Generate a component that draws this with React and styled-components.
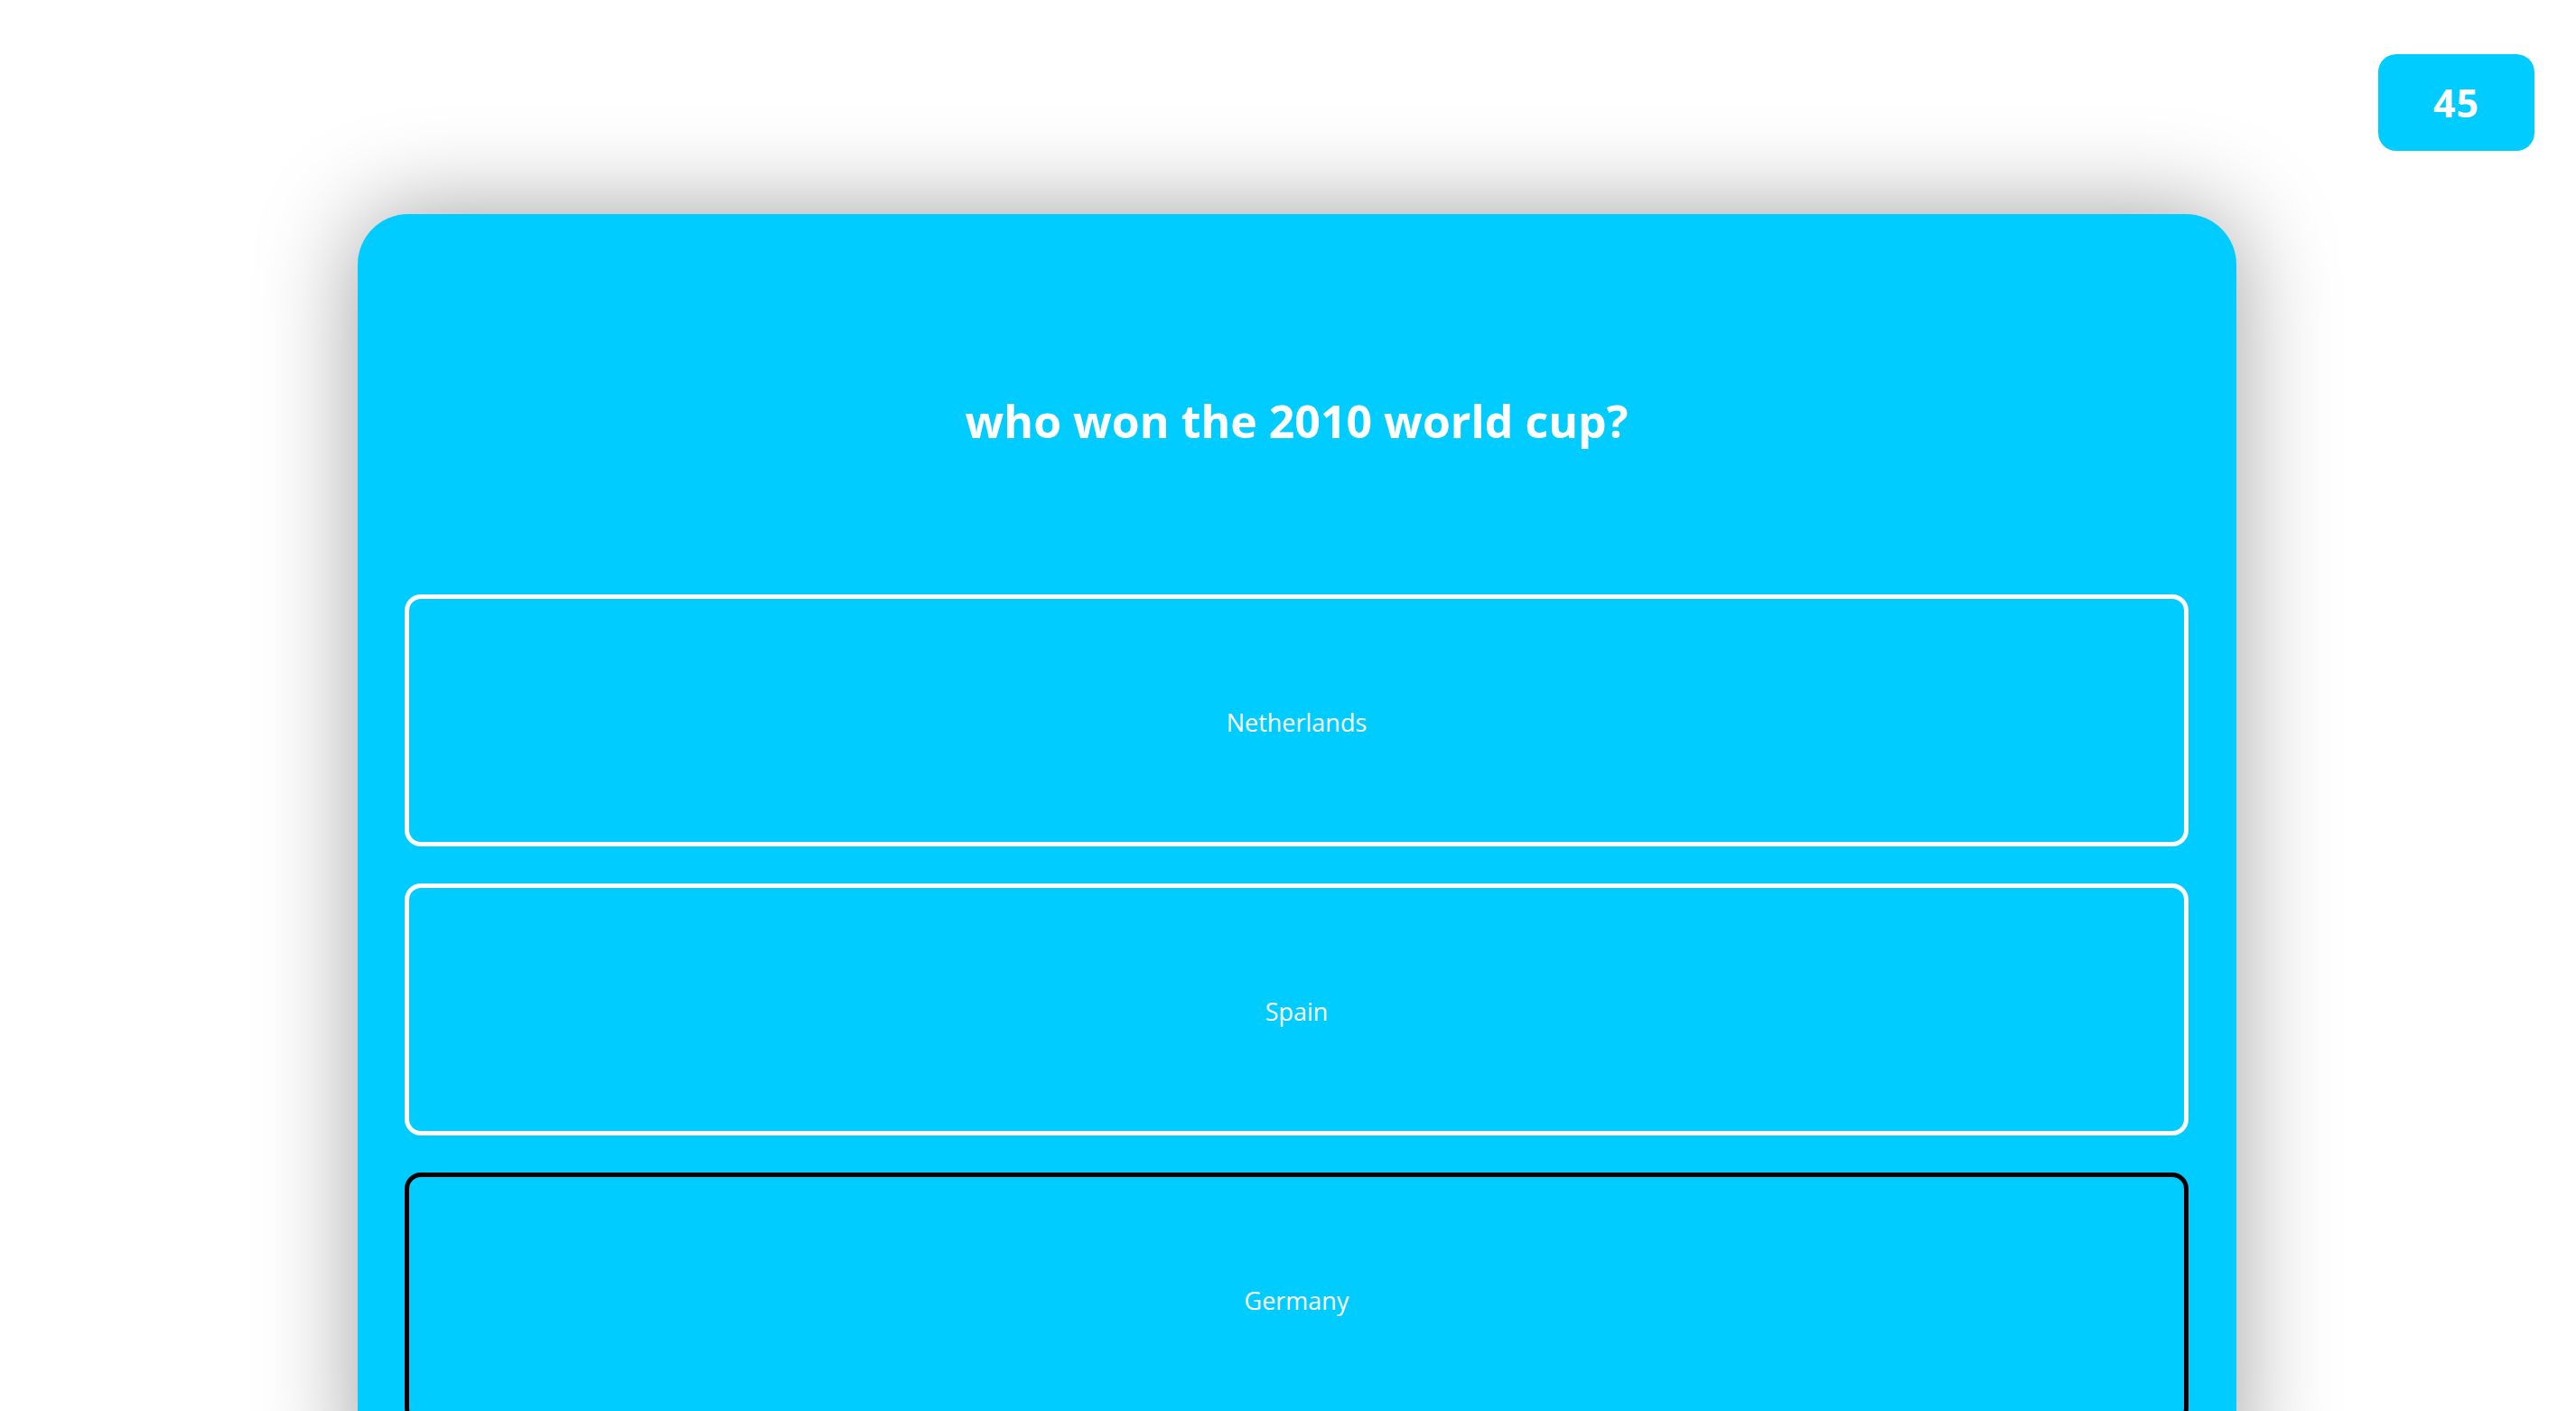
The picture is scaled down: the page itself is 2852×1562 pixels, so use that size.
import React from "react";
import styled, { createGlobalStyle } from "styled-components";

const GlobalStyle = createGlobalStyle`
  html, body {
    margin: 0;
    padding: 0;
    background: #ffffff;
    font-family: "Open Sans", "Noto Sans", sans-serif;
    overflow: hidden;
  }
`;

const Page = styled.div`
  width: 100%;
  min-height: 100vh;
`;

const TopBar = styled.div`
  display: flex;
  justify-content: flex-end;
  padding: 60px 46px 0 0;
`;

const Timer = styled.div`
  width: 173px;
  height: 107px;
  border-radius: 20px;
  background: #00ccff;
  color: #ffffff;
  font-size: 43px;
  font-weight: 700;
  display: flex;
  align-items: center;
  justify-content: center;
  letter-spacing: 1px;
`;

const Card = styled.div`
  width: 2080px;
  margin: 70px 0 0 396px;
  box-sizing: border-box;
  padding: 199px 53px 80px 52px;
  background: #00ccff;
  border-radius: 56px;
  box-shadow: 0 0 110px rgba(0, 0, 0, 0.38);
`;

const Question = styled.h1`
  margin: 0 0 162px;
  height: 60px;
  line-height: 60px;
  text-align: center;
  color: #ffffff;
  font-size: 50px;
  font-weight: 700;
`;

const Options = styled.div`
  display: flex;
  flex-direction: column;
  gap: 41px;
`;

const Option = styled.button`
  height: 279px;
  width: 100%;
  box-sizing: border-box;
  border: 5px solid ${(p) => (p.active ? "#000000" : "#ffffff")};
  border-radius: 18px;
  background: #00ccff;
  color: #ffffff;
  font-family: "Open Sans", "Noto Sans", sans-serif;
  font-size: 27px;
  padding-top: 4px;
  cursor: pointer;
`;

const answers = ["Netherlands", "Spain", "Germany"];

export default function App() {
  return (
    <Page>
      <GlobalStyle />
      <TopBar>
        <Timer>45</Timer>
      </TopBar>
      <Card>
        <Question>who won the 2010 world cup?</Question>
        <Options>
          {answers.map((a) => (
            <Option key={a} active={a === "Germany"}>
              {a}
            </Option>
          ))}
        </Options>
      </Card>
    </Page>
  );
}
